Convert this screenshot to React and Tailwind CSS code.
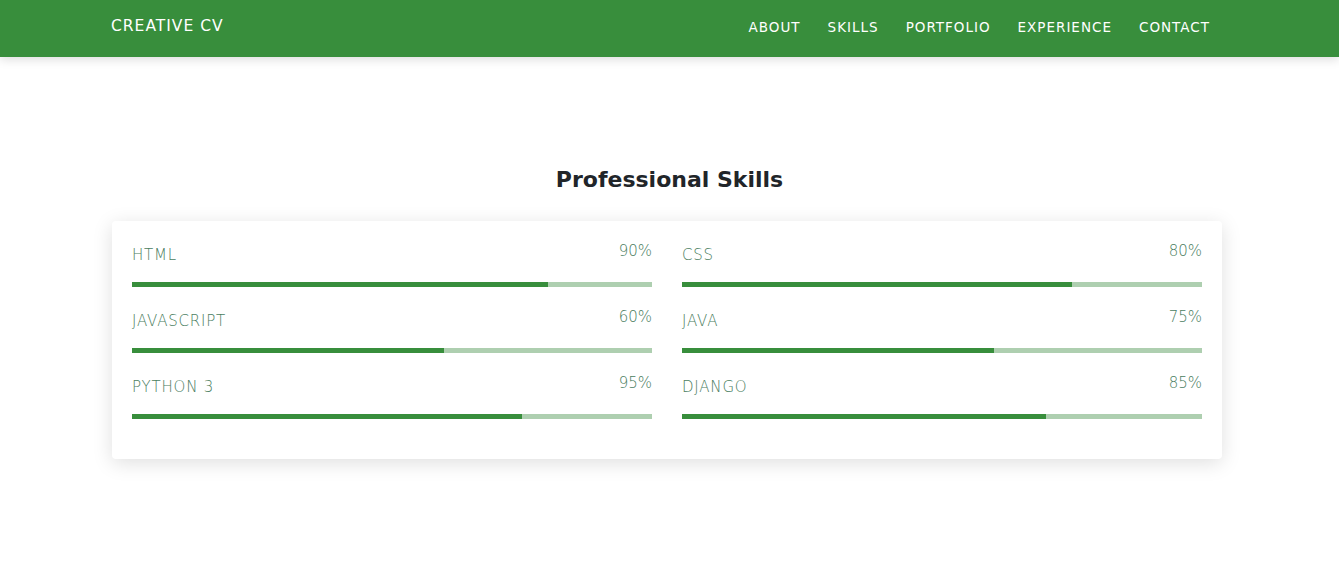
import React from "react";

const skills = [
  { name: "HTML", pct: "90%", w: 80 },
  { name: "CSS", pct: "80%", w: 75 },
  { name: "JAVASCRIPT", pct: "60%", w: 60 },
  { name: "JAVA", pct: "75%", w: 60 },
  { name: "PYTHON 3", pct: "95%", w: 75 },
  { name: "DJANGO", pct: "85%", w: 70 },
];

const font = { fontFamily: '"DejaVu Sans", "Noto Sans", sans-serif' };

export default function App() {
  return (
    <div className="min-h-[579px] bg-white" style={font}>
      <nav className="h-[57px] bg-[#388e3c] shadow-[0_2px_10px_rgba(0,0,0,0.15)] relative z-10">
        <div className="w-[1110px] ml-[111px] h-full flex items-center justify-between pb-[3px]">
          <div className="text-[15.5px] text-white tracking-[1px]">CREATIVE CV</div>
          <ul className="flex items-center gap-[27px] pr-[11px] text-[13.5px] text-white tracking-[1px] font-medium">
            <li>ABOUT</li>
            <li>SKILLS</li>
            <li>PORTFOLIO</li>
            <li>EXPERIENCE</li>
            <li>CONTACT</li>
          </ul>
        </div>
      </nav>
      <main className="pt-[108px]">
        <h2 className="text-center text-[22px] leading-[29px] font-bold text-[#212529]">Professional Skills</h2>
        <div className="w-[1110px] ml-[112px] mt-[27px] bg-white rounded-[4px] shadow-[0_4px_20px_rgba(0,0,0,0.13)] p-[20px]">
          <div className="grid grid-cols-2 gap-x-[30px]">
            {skills.map((s) => (
              <div key={s.name} className="mb-[20px]">
                <div className="flex justify-between items-start text-[15px] leading-[18px] font-light text-[#4a7d60]">
                  <span className="mt-[5px] tracking-[0.8px]">{s.name}</span>
                  <span className="mt-[1px]">{s.pct}</span>
                </div>
                <div className="mt-[18px] h-[5px] bg-[#aecfb0]">
                  <div className="h-full bg-[#388e3c]" style={{ width: `${s.w}%` }} />
                </div>
              </div>
            ))}
          </div>
        </div>
      </main>
    </div>
  );
}
